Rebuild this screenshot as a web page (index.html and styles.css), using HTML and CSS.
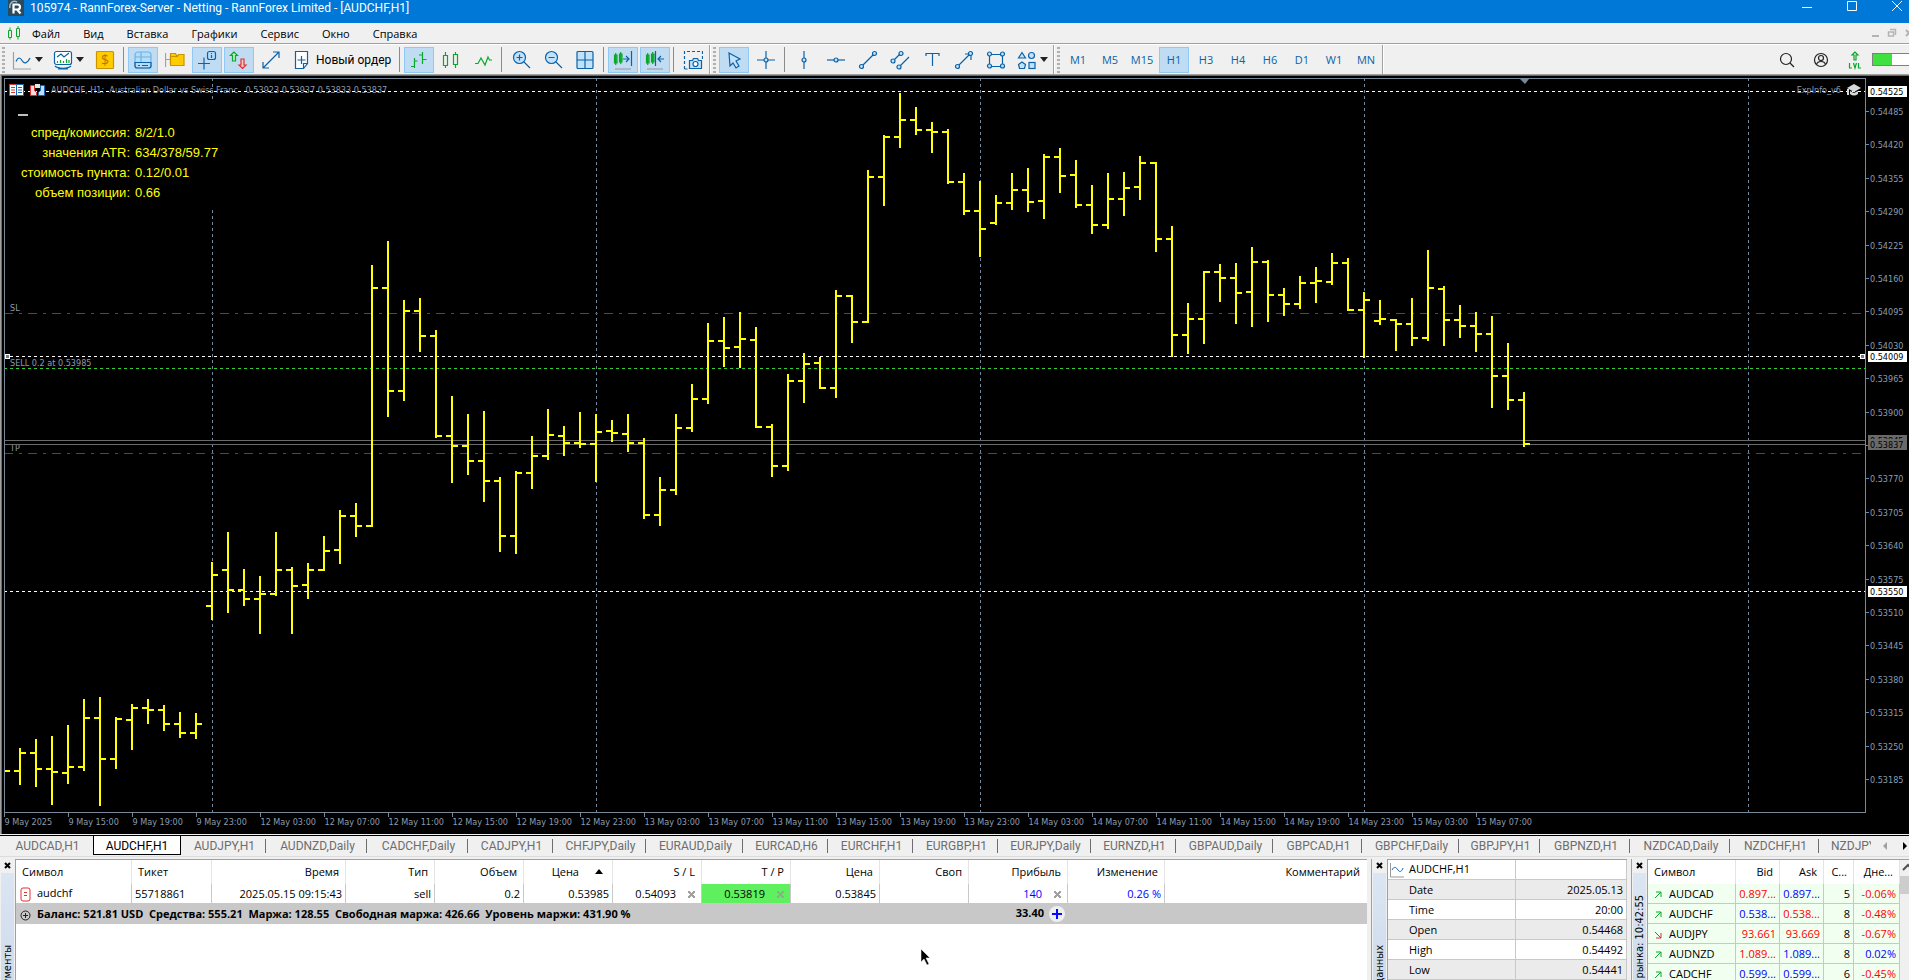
FILE: index.html
```html
<!DOCTYPE html>
<html lang="ru">
<head>
    <meta charset="UTF-8" />
    <meta name="viewport" content="width=device-width, initial-scale=1.0" />
    <title>105974 - RannForex-Server - Netting - RannForex Limited - [AUDCHF,H1]</title>
    <link rel="stylesheet" href="styles.css">
</head>
<body>
    <header class="titlebar">
        <svg class="logo" width="16" height="16" viewBox="0 0 16 16"><rect width="16" height="16" fill="#2b4a5c"/><path d="M2 8C1 3 5 0 9 2" fill="none" stroke="#9fb6c2" stroke-width="1.5"/><path d="M5.500 13.500V4.500H9.500a2.500 2.500 0 0 1 0 5H6M9 9.500l3.500 4" fill="none" stroke="#fff" stroke-width="2.200"/></svg>
        <span class="title-text">105974 - RannForex-Server - Netting - RannForex Limited - [AUDCHF,H1]</span>
        <div class="window-buttons">
            <button aria-label="Свернуть"><svg width="12" height="12"><path d="M1 7.500h10"/></svg></button>
            <button aria-label="Развернуть"><svg width="12" height="12"><path d="M1.500 1.500h9v9h-9z"/></svg></button>
            <button aria-label="Закрыть"><svg width="12" height="12"><path d="M1 1l10 10M11 1L1 11"/></svg></button>
        </div>
    </header>

    <nav class="menubar">
        <svg class="green" width="14" height="16" viewBox="0 0 14 16"><path d="M1.500 5.500h3v7h-3zM3 2.500v3M3 12.500v2M9.500 3.500h3v8h-3zM11 1v2.500M11 11.500v3"/></svg>
        <button>Файл</button>
        <button>Вид</button>
        <button>Вставка</button>
        <button>Графики</button>
        <button>Сервис</button>
        <button>Окно</button>
        <button>Справка</button>
        <div class="child-buttons">
            <svg width="10" height="10"><path d="M2 8h7" stroke="#b4b4b4" stroke-width="2"/></svg>
            <svg width="10" height="10"><path d="M1.500 4h5v4h-5zM3 1.500h5.500V7" fill="none" stroke="#b4b4b4" stroke-width="1.500"/></svg>
            <svg width="10" height="10"><path d="M2 2l6 6M8 2L2 8" stroke="#b4b4b4" stroke-width="2"/></svg>
        </div>
    </nav>

    <div class="toolbar">
        <i class="grip"></i>
        <button class="tool wide" aria-label="График"><svg><path class="gray" d="M1.500 2v17H19"/><path d="M4 11.500C6 7 8 7 10 10.500S15 14 18 8"/></svg><i class="caret"></i></button>
        <button class="tool wide" aria-label="Индикаторы"><svg><rect x="1.500" y="1.500" width="17" height="13" rx="2" fill="#fff"/><path d="M4 7l4-3 3 3 5-4"/><path class="green" d="M4.500 13v-2M7.500 13v-3M10.500 13v-2M13.500 13v-4M16 13v-3"/><path d="M2 16c3 3 13 3 16 0M5 19h10"/></svg><i class="caret"></i></button>
        <button class="tool" aria-label="Торговля"><svg><rect x="1.500" y="1.500" width="17" height="17" rx="1" fill="#ffcc00" stroke="#cc9300"/><text x="10" y="15" class="dollar">$</text></svg></button>
        <i class="sep"></i>
        <button class="tool active" aria-label="Обзор рынка"><svg><rect x="2" y="2" width="16" height="16" rx="3" fill="#b5dcfa" stroke="#6fb2e0"/><path d="M2 7h16M8 2v10" stroke="#6fb2e0"/><path d="M2 12.500h16V16q0 2-2 2H4q-2 0-2-2zM5 15.500h2m2 0h6"/></svg></button>
        <button class="tool" aria-label="Навигатор"><svg><path class="gray" d="M.5 3v14M1 9.500h4"/><path d="M5.500 3.500h5l1 2h4v8h-10z" fill="#ffcc00" stroke="#cc9300"/><path d="M5.500 6.500h7l1-2h5.500v11H5.500z" fill="#ffcc00" stroke="#cc9300"/></svg></button>
        <button class="tool active" aria-label="Окно данных"><svg><path d="M1 13.500h12M7 7.500v12"/><rect x="10.500" y="1.500" width="8" height="8" rx="2" fill="#b5dcfa"/><path d="M14.500 3v1M14.500 5v3"/></svg></button>
        <button class="tool active" aria-label="Тик"><svg><path class="green" fill="#b9f0c0" d="M5 2L1.500 5.500h2V11h3V5.500h2z"/><path stroke="#e03131" fill="#ffc4c4" d="M13.500 18.500L17 15h-2V9h-3v6h-2z"/></svg></button>
        <button class="tool" aria-label="Растянуть"><svg><path d="M2 18L18 2M12 2h6v6M2 12v6h6"/></svg></button>
        <button class="tool order"><svg><path d="M3.500 1.500h12v12l-4 5h-8z" fill="#fff"/><path d="M9.500 6v8M5.500 10h8M15.500 13.500h-4v5"/></svg>Новый ордер</button>
        <i class="sep"></i>
        <button class="tool active" aria-label="Бары"><svg class="green"><path d="M5.500 8v10M2 16.500h3.500M5.500 11h3M13.500 2v12M10 5h3.500M13.500 9.500h4"/></svg></button>
        <button class="tool" aria-label="Свечи"><svg class="green"><path d="M2.500 5.500h4v10h-4zM4.500 2v3.500M4.500 15.500V18M12.500 4.500h4v10h-4zM14.500 2v2.500M14.500 14.500V18"/></svg></button>
        <button class="tool" aria-label="Линия"><svg class="green"><path d="M2 13.500h3L8 8l4 7 3-8 1.500 3H19"/></svg></button>
        <i class="sep"></i>
        <button class="tool" aria-label="Увеличить"><svg><circle cx="8.500" cy="7.500" r="6" fill="#c2e2fa"/><path d="M13 12l6 6M8.500 4.500v6M5.500 7.500h6"/></svg></button>
        <button class="tool" aria-label="Уменьшить"><svg><circle cx="8.500" cy="7.500" r="6" fill="#c2e2fa"/><path d="M13 12l6 6M5.500 7.500h6"/></svg></button>
        <button class="tool" aria-label="Плитка"><svg><rect x="2" y="1.500" width="16" height="17" rx="1" fill="#c2e2fa"/><path d="M10 1.500v17M2 10h16"/></svg></button>
        <i class="sep"></i>
        <button class="tool active" aria-label="Автопрокрутка"><svg><path class="green" d="M1.500 5h2.500v8H1.500zM2.700 3v12M6.500 4h2.500v8H6.500zM7.700 2v12"/><path d="M10 9h5m-2-3l3 3-3 3M18.500 1v15"/><path class="gray" d="M2 19h16"/></svg></button>
        <button class="tool active" aria-label="Сдвиг графика"><svg><path class="green" d="M1.500 5h2.500v8H1.500zM2.700 3v12M6.500 4h2.500v8H6.500zM7.700 2v12"/><path d="M19 9h-5m2-3l-3 3 3 3M10.500 1v15"/><path class="gray" d="M2 19h16"/></svg></button>
        <i class="sep"></i>
        <button class="tool" aria-label="Снимок"><svg><path d="M1.500 19V1.500h18V9M1.500 19H5" stroke-dasharray="3 2"/><path d="M6.500 10.500h3l1-2h4l1 2h3v8h-12z" fill="#c2e2fa"/><circle cx="12.500" cy="14" r="2.500" fill="#fff"/></svg></button>
        <i class="edge"></i>
        <i class="grip"></i>
        <button class="tool active" aria-label="Курсор"><svg><path d="M5 3l11 6-4 2 3 5-3 2-3-5-3 3z" fill="#c2e2fa"/></svg></button>
        <button class="tool" aria-label="Перекрестие"><svg><path d="M10 1v7M10 12v7M1 10h7M12 10h7"/><circle cx="10" cy="10" r="2" fill="#c2e2fa"/></svg></button>
        <i class="sep"></i>
        <button class="tool" aria-label="Вертикальная линия"><svg><path d="M10 1v18"/><circle cx="10" cy="10" r="2" fill="#c2e2fa"/></svg></button>
        <button class="tool" aria-label="Горизонтальная линия"><svg><path d="M1 10h18"/><circle cx="10" cy="10" r="2" fill="#c2e2fa"/></svg></button>
        <button class="tool" aria-label="Трендовая линия"><svg><path d="M3 17L17 3"/><circle cx="3.500" cy="16.500" r="2" fill="#c2e2fa"/><circle cx="16.500" cy="3.500" r="2" fill="#c2e2fa"/></svg></button>
        <button class="tool" aria-label="Канал"><svg><path d="M3 11l8-8M9 17L19 7"/><circle cx="3" cy="11" r="2" fill="#c2e2fa"/><circle cx="11" cy="3.500" r="2" fill="#c2e2fa"/><circle cx="9" cy="17" r="2" fill="#c2e2fa"/></svg></button>
        <button class="tool" aria-label="Текст"><svg><path d="M4 6V3.500h13V6M10.500 3.500V16"/></svg></button>
        <button class="tool" aria-label="Стрелка"><svg><path d="M3 17L17 3M11 4h6v6"/><circle cx="3.500" cy="16.500" r="2" fill="#c2e2fa"/><circle cx="16.500" cy="3.500" r="2" fill="#c2e2fa"/></svg></button>
        <button class="tool" aria-label="Прямоугольник"><svg><path d="M3.500 4.500h13v12h-13z"/><circle cx="3.500" cy="4" r="2" fill="#c2e2fa"/><circle cx="16.500" cy="4" r="2" fill="#c2e2fa"/><circle cx="3.500" cy="16" r="2" fill="#c2e2fa"/><circle cx="16.500" cy="16" r="2" fill="#c2e2fa"/></svg></button>
        <button class="tool wide" aria-label="Фигуры"><svg><g fill="#c2e2fa"><path d="M5 2.500L8.500 8h-7z"/><circle cx="14.500" cy="5.500" r="3"/><path d="M5 12l3.500 2.500-1 4h-5l-1-4z"/><rect x="12" y="12.500" width="6" height="6"/></g></svg><i class="caret"></i></button>
        <i class="edge"></i>
        <i class="grip"></i>
        <button class="tool frame">M1</button>
        <button class="tool frame">M5</button>
        <button class="tool frame">M15</button>
        <button class="tool frame active">H1</button>
        <button class="tool frame">H3</button>
        <button class="tool frame">H4</button>
        <button class="tool frame">H6</button>
        <button class="tool frame">D1</button>
        <button class="tool frame">W1</button>
        <button class="tool frame">MN</button>
        <i class="edge"></i>
        <div class="status">
            <button class="tool" aria-label="Поиск"><svg class="dark"><circle cx="9" cy="9" r="5.500"/><path d="M13 13l4 4"/></svg></button>
            <button class="tool" aria-label="Профиль"><svg class="dark"><circle cx="10" cy="10" r="6.500"/><circle cx="10" cy="8" r="2.500"/><path d="M5.500 14.500c1-4 8-4 9 0"/></svg></button>
            <button class="tool" aria-label="Уровень"><svg class="green"><path d="M10 2L7 5h2v5h2V5h2zM4.500 13v5H7M8.500 13l1.500 5 1.500-5M13.500 13v5H16"/></svg></button>
            <div class="battery"><div class="charge"></div></div>
        </div>
    </div>

    <main class="chart">
        <svg class="plot" id="plot"></svg>
        <svg class="scale" id="scale"></svg>
        <div class="chart-title">
            <svg width="15" height="12"><path d="M.5.500h7v11h-7z" fill="#fff" stroke="#e0302e"/><path d="M7.500.500h7v11h-7z" fill="#fff" stroke="#1267b5"/><path d="M2 3.500h4M2 6h4M2 8.500h4" stroke="#e0302e"/><path d="M9 3.500h4M9 6h4M9 8.500h4" stroke="#1267b5"/></svg>
            <svg width="15" height="12"><path d="M.5 1.500h4v5l2 2v3h-6z" fill="#ffdcdc" stroke="#e0302e"/><path d="M14.500 1.500h-4v5l-2 2v3h6z" fill="#bfe0fa" stroke="#1267b5"/><path d="M5 0h5v4H5z" fill="#e8e8e8"/></svg>
        </div>
        <div class="expert">
            <svg width="16" height="14"><path d="M1 5l7-4 7 4-7 4zM4 8v3q4 3 8 0V8L8 10z" fill="#d8d8d8"/><path d="M2 6v6" stroke="#d8d8d8" stroke-width="2"/></svg>
        </div>
        <div class="info">
            <div class="collapse"></div>
            <table>
                <tr><th>спред/комиссия:</th><td>8/2/1.0</td></tr>
                <tr><th>значения ATR:</th><td>634/378/59.77</td></tr>
                <tr><th>стоимость пункта:</th><td>0.12/0.01</td></tr>
                <tr><th>объем позиции:</th><td>0.66</td></tr>
            </table>
        </div>
    </main>

    <nav class="tabs">
        <button>AUDCAD,H1</button>
        <button class="current">AUDCHF,H1</button>
        <button>AUDJPY,H1</button>
        <button>AUDNZD,Daily</button>
        <button>CADCHF,Daily</button>
        <button>CADJPY,H1</button>
        <button>CHFJPY,Daily</button>
        <button>EURAUD,Daily</button>
        <button>EURCAD,H6</button>
        <button>EURCHF,H1</button>
        <button>EURGBP,H1</button>
        <button>EURJPY,Daily</button>
        <button>EURNZD,H1</button>
        <button>GBPAUD,Daily</button>
        <button>GBPCAD,H1</button>
        <button>GBPCHF,Daily</button>
        <button>GBPJPY,H1</button>
        <button>GBPNZD,H1</button>
        <button>NZDCAD,Daily</button>
        <button>NZDCHF,H1</button>
        <button class="cut">NZDJPY</button>
        <span class="scroll"><i class="left"></i><i class="right"></i></span>
    </nav>

    <div class="panels">
        <section class="panel terminal">
            <div class="side">
                <button class="close" aria-label="Закрыть"><svg width="7" height="7"><path d="M1 1l5 5M6 1L1 6"/></svg></button>
                <div class="strip low"><span>Инструменты</span></div>
            </div>
            <div class="content">
                <table class="trades">
                    <colgroup><col class="c-symbol"><col class="c-ticket"><col class="c-time"><col><col><col><col><col><col><col><col class="c-profit"><col class="c-change"><col class="c-comment"></colgroup>
                    <thead>
                        <tr><th class="l">Символ</th><th class="l">Тикет</th><th>Время</th><th>Тип</th><th>Объем</th><th class="sorted">Цена<i></i></th><th>S / L</th><th>T / P</th><th>Цена</th><th>Своп</th><th>Прибыль</th><th>Изменение</th><th>Комментарий</th></tr>
                    </thead>
                    <tbody>
                        <tr>
                            <td class="l"><svg width="11" height="15"><rect x="1" y="1" width="9" height="13" rx="2" fill="#fff" stroke="#e03131" stroke-width="1"/><path d="M4 5.500h3M4 8.500h3" stroke="#e03131"/></svg>audchf</td>
                            <td class="l">55718861</td><td>2025.05.15 09:15:43</td><td>sell</td><td>0.2</td><td>0.53985</td>
                            <td>0.54093<b class="x"></b></td><td class="hit">0.53819<b class="x"></b></td><td>0.53845</td><td></td>
                            <td class="up">140<b class="x"></b></td><td class="up">0.26 %</td><td></td>
                        </tr>
                        <tr class="balance">
                            <td class="l" colspan="10"><svg width="11" height="11"><circle cx="5.500" cy="5.500" r="4.500" fill="none" stroke="#222"/><path d="M5.500 3v5M3 5.500h5" stroke="#222"/></svg>Баланс: 521.81 USD&nbsp; Средства: 555.21&nbsp; Маржа: 128.55&nbsp; Свободная маржа: 426.66&nbsp; Уровень маржи: 431.90 %</td>
                            <td>33.40<svg class="plus" width="16" height="16"><circle cx="8" cy="8" r="8" fill="#efefef"/><path d="M8 3v10M3 8h10" stroke="#0a0aff" stroke-width="2"/></svg></td><td></td><td></td>
                        </tr>
                    </tbody>
                </table>
            </div>
        </section>

        <section class="panel data">
            <div class="side">
                <button class="close" aria-label="Закрыть"><svg width="7" height="7"><path d="M1 1l5 5M6 1L1 6"/></svg></button>
                <div class="strip low"><span>Окно данных</span></div>
            </div>
            <div class="content">
                <table class="values">
                    <tr><th><svg width="16" height="16"><path d="M1.500 1v14H15" fill="none" stroke="#999"/><path d="M3 8c2-4 4-3 6 0s4 1 5-2" fill="none" stroke="#1267b5"/></svg>AUDCHF,H1</th><td></td></tr>
                    <tr><th>Date</th><td>2025.05.13</td></tr>
                    <tr><th>Time</th><td>20:00</td></tr>
                    <tr><th>Open</th><td>0.54468</td></tr>
                    <tr><th>High</th><td>0.54492</td></tr>
                    <tr><th>Low</th><td>0.54441</td></tr>
                </table>
            </div>
        </section>

        <section class="panel watch">
            <div class="side">
                <button class="close" aria-label="Закрыть"><svg width="7" height="7"><path d="M1 1l5 5M6 1L1 6"/></svg></button>
                <div class="strip"><span>Обзор рынка: 10:42:55</span></div>
            </div>
            <div class="content">
                <table class="quotes">
                    <colgroup><col class="q-symbol"><col class="q-price"><col class="q-price"><col class="q-spread"><col></colgroup>
                    <thead><tr><th class="l">Символ</th><th>Bid</th><th>Ask</th><th>С...</th><th>Дне...</th></tr></thead>
                    <tbody>
                        <tr><td class="l"><svg class="rise"><path d="M1 7l6-6M2 1h5v5"/></svg>AUDCAD</td><td class="down">0.897...</td><td class="up">0.897...</td><td>5</td><td class="down">-0.06%</td></tr>
                        <tr><td class="l"><svg class="rise"><path d="M1 7l6-6M2 1h5v5"/></svg>AUDCHF</td><td class="up">0.538...</td><td class="down">0.538...</td><td>8</td><td class="down">-0.48%</td></tr>
                        <tr><td class="l"><svg class="fall"><path d="M1 1l6 6M2 7h5V2"/></svg>AUDJPY</td><td class="down">93.661</td><td class="down">93.669</td><td>8</td><td class="down">-0.67%</td></tr>
                        <tr><td class="l"><svg class="rise"><path d="M1 7l6-6M2 1h5v5"/></svg>AUDNZD</td><td class="down">1.089...</td><td class="up">1.089...</td><td>8</td><td class="up">0.02%</td></tr>
                        <tr><td class="l"><svg class="rise"><path d="M1 7l6-6M2 1h5v5"/></svg>CADCHF</td><td class="up">0.599...</td><td class="up">0.599...</td><td>6</td><td class="down">-0.45%</td></tr>
                    </tbody>
                </table>
                <div class="scrollbar"><svg width="10" height="16"><path d="M3 10l5-5 5 5" fill="none" stroke="#505050" stroke-width="2"/></svg><div class="thumb"></div></div>
            </div>
        </section>
    </div>

    <svg class="pointer" width="11" height="18"><path d="M1 1v13l3-3 3 6 2-1-3-6h4z" fill="#000" stroke="#fff" stroke-width=".5"/></svg>

    <script src="chart.js"></script>
</body>
</html>
```
FILE: styles.css
```css
:root {
    --face: #f0f0f0;
    --blue: #0b62a8;
    --green: #0aa82a;
    --grid: #778899;
    --hot: #c0dcf3;
    --hot-border: #90c8f6;
}
* {
    box-sizing: border-box;
}
body {
    margin: 0;
    height: 100vh;
    display: flex;
    flex-direction: column;
    overflow: hidden;
    background: var(--face);
    color: #000;
    font-family: "Open Sans", "Noto Sans", sans-serif;
    font-size: 11px;
}
button {
    border: none;
    background: none;
    padding: 0;
    margin: 0;
    font: inherit;
    color: inherit;
}
table {
    border-collapse: separate;
    border-spacing: 0;
}

/* title and menu */
.titlebar {
    flex: none;
    display: flex;
    height: 23px;
    padding-left: 8px;
    background: #0078d7;
    color: #fff;
    font: 12px/16px Roboto, sans-serif;
}
.logo {
    margin-right: 6px;
}
.window-buttons {
    margin-left: auto;
    display: flex;
}
.window-buttons button {
    width: 45px;
    height: 16px;
}
.window-buttons button:last-child {
    margin-right: -10px;
}
.window-buttons path {
    fill: none;
    stroke: #fff;
}
.menubar {
    flex: none;
    display: flex;
    align-items: center;
    gap: 23px;
    height: 21px;
    padding-left: 7px;
    border-bottom: 1px solid #a0a0a0;
}
.menubar > svg {
    margin-right: -12px;
    fill: none;
    stroke: var(--green);
}
.child-buttons {
    margin-left: auto;
    display: flex;
    gap: 7px;
    margin-right: -5px;
}

/* toolbar */
.toolbar {
    flex: none;
    display: flex;
    align-items: center;
    height: 30px;
    border-top: 1px solid #fff;
}
.grip {
    width: 3px;
    height: 26px;
    margin: 0 2px;
    background: repeating-linear-gradient(#b0b0b0 0 2px, transparent 2px 4px);
}
.sep, .edge {
    flex: none;
    width: 1px;
    height: 25px;
    margin: 0 3px 0 2px;
    background: #8c8c8c;
}
.edge {
    width: 2px;
    height: 29px;
    margin: 0;
    background: #a0a0a0;
    border-right: 1px solid #fff;
}
.tool {
    flex: none;
    display: flex;
    align-items: center;
    justify-content: center;
    width: 30px;
    height: 26px;
    margin: 0 1px;
    border: 1px solid transparent;
}
.tool.active {
    background: var(--hot);
    border-color: var(--hot-border);
}
.tool svg {
    flex: none;
    width: 20px;
    height: 20px;
    fill: none;
    stroke: var(--blue);
    stroke-width: 1.2;
}
.tool svg.green, .tool .green {
    stroke: var(--green);
}
.tool svg.dark {
    stroke: #222;
}
.tool .gray {
    stroke: #a0a0a0;
}
.dollar {
    font: 14px "Open Sans", sans-serif;
    text-anchor: middle;
    fill: #b07800;
    stroke: none;
}
.wide {
    width: 41px;
    margin: 0;
    padding-left: 4px;
    justify-content: flex-start;
}
.caret {
    margin-left: 3px;
    border: 4px solid transparent;
    border-top: 5px solid #222;
    border-bottom: none;
}
.order {
    width: 108px;
    padding-left: 3px;
    gap: 4px;
    justify-content: flex-start;
    font: 12px Roboto, sans-serif;
    white-space: nowrap;
}
.frame {
    color: var(--blue);
}
.status {
    margin-left: auto;
    display: flex;
    align-items: center;
}
.status .tool {
    margin: 0 2px;
}
.battery {
    width: 37px;
    height: 13px;
    border: 1px solid #808080;
    border-right: none;
    background: #fff;
}
.charge {
    width: 19px;
    height: 11px;
    background: #40e040;
}

/* chart */
.chart {
    flex: none;
    position: relative;
    display: flex;
    height: 760px;
    background: #000;
    border-top: 1px solid #a0a0a0;
    border-left: 1px solid #a0a0a0;
    box-shadow: inset 1px 1px #696969;
}
.plot {
    flex: 1;
    min-width: 0;
    height: 759px;
}
.scale {
    flex: none;
    width: 44px;
    height: 759px;
}
.chart text {
    font: 9px "DejaVu Sans Condensed", "DejaVu Sans", sans-serif;
    fill: #8c9cad;
}
.chart .tag {
    fill: #000;
}
.axis {
    fill: none;
    stroke: var(--grid);
}
.day {
    stroke: var(--grid);
    stroke-dasharray: 3 3;
}
.level {
    stroke: #fff;
    stroke-dasharray: 3 3;
}
.entry {
    stroke: #32cd32;
    stroke-dasharray: 3 3;
}
.stop {
    stroke: #f00;
    stroke-dasharray: 9 6 3 6;
}
.quote {
    stroke: #696969;
}
.bars {
    fill: none;
    stroke: #ff0;
    stroke-width: 2;
}
.chart-title {
    position: absolute;
    left: 8px;
    top: 9px;
    display: flex;
    gap: 6px;
}
.expert {
    position: absolute;
    right: 47px;
    top: 8px;
}
.info {
    position: absolute;
    left: 5px;
    top: 25px;
    width: 212px;
    height: 110px;
    background: #000;
    color: #ff0;
    font: 13px/20px "Liberation Sans", Arial, sans-serif;
}
.info th {
    min-width: 129px;
    width: 129px;
    padding: 0 5px 0 3px;
    text-align: right;
    font-weight: normal;
    white-space: nowrap;
}
.info td {
    padding: 0;
}
.collapse {
    width: 10px;
    height: 2px;
    margin: 14px 0 7px 12px;
    background: #c0c0c0;
}

/* chart tabs */
.tabs {
    flex: none;
    display: grid;
    grid-template-columns: 93px 88px 85px 101px 101px 85px 93px 97px 85px 85px 85px 93px 85px 97px 89px 97px 81px 90px 100px 89px 52px 1fr;
    height: 22px;
    margin-top: 1px;
    border-top: 1px solid #000;
    border-bottom: 1px solid #dcdcdc;
    color: #6d6d6d;
    font: 12px Roboto, sans-serif;
}
.tabs button {
    height: 19px;
    padding: 1px 0 0 2px;
    background: linear-gradient(#6d6d6d, #6d6d6d) right center / 1px 14px no-repeat;
    white-space: nowrap;
}
.tabs button:first-child {
    background: none;
}
.tabs .current {
    padding-left: 0;
    border: 1px solid #000;
    border-top: none;
    background: #fff;
    color: #000;
}
.tabs .cut {
    background: none;
    padding-left: 12px;
    overflow: hidden;
    text-align: left;
}
.scroll {
    display: flex;
    justify-content: space-between;
    align-items: center;
    padding: 0 2px 0 12px;
}
.scroll i {
    border: 4px solid transparent;
}
.scroll .left {
    border-right-color: #a0a0a0;
    border-left: none;
}
.scroll .right {
    border-left-color: #000;
    border-right: none;
}

/* docked panels */
.panels {
    flex: 1;
    min-height: 0;
    display: flex;
    margin-top: 2px;
}
.panel {
    display: flex;
    min-width: 0;
    overflow: hidden;
}
.terminal {
    flex: 1;
}
.data {
    flex: none;
    width: 260px;
    border-left: 1px solid #a0a0a0;
}
.watch {
    flex: none;
    width: 278px;
    border-left: 1px solid #a0a0a0;
}
.side {
    flex: none;
    width: 15px;
    padding: 0 1px;
}
.close {
    display: flex;
    align-items: center;
    justify-content: center;
    width: 12px;
    height: 12px;
    margin-bottom: 2px;
}
.close path {
    stroke: #000;
    stroke-width: 2;
}
.strip {
    width: 13px;
    height: 400px;
    padding-top: 22px;
    background: linear-gradient(#dbe6f3, #a9bdd6);
    font: 11px/13px "DejaVu Sans Condensed", "DejaVu Sans", sans-serif;
}
.strip.low {
    padding-top: 72px;
}
.strip span {
    display: block;
    writing-mode: vertical-rl;
    transform: rotate(180deg);
    white-space: nowrap;
}
.content {
    flex: 1;
    min-width: 0;
    margin-right: 4px;
    border-top: 1px solid #a0a0a0;
    border-left: 1px solid #a0a0a0;
    background: #fff;
}
.panel table {
    table-layout: fixed;
    width: 100%;
}
.panel th, .panel td {
    padding: 0 3px;
    border-right: 1px solid #c8c8c8;
    font-weight: normal;
    text-align: right;
    white-space: nowrap;
    overflow: hidden;
}
.panel thead th {
    height: 24px;
    padding: 0 6px 2px;
    border-color: #e4e4e4;
}
.panel .l {
    text-align: left;
}
.panel td svg {
    vertical-align: middle;
}
.panel .up {
    color: #00f;
}
.panel .down {
    color: #f00;
}
.trades col {
    width: 89px;
}
.trades .c-symbol { width: 116px; }
.trades .c-ticket { width: 80px; }
.trades .c-time { width: 134px; }
.trades .c-profit { width: 99px; }
.trades .c-change { width: 97px; }
.trades .c-comment { width: auto; }
.trades td {
    height: 19px;
}
.trades td:first-child {
    padding-left: 4px;
}
.trades td:first-child svg {
    margin-right: 6px;
}
.trades tr > :last-child {
    border-color: transparent;
}
.sorted i {
    display: inline-block;
    margin: 0 3px 2px 16px;
    border: 4px solid transparent;
    border-top: none;
    border-bottom: 5px solid #000;
}
.hit {
    background: #5ff05f;
}
.x {
    display: inline-block;
    width: 7px;
    height: 7px;
    margin: 0 3px 0 12px;
    background:
        linear-gradient(45deg, transparent 40%, #a0a0a0 40% 60%, transparent 60%),
        linear-gradient(135deg, transparent 40%, #a0a0a0 40% 60%, transparent 60%);
}
.balance td {
    height: 21px;
    border: none;
    background: #c8c8c8;
    font-weight: bold;
}
.plus {
    margin-left: 5px;
}
.panel .values th, .panel .values td {
    height: 20px;
    border-bottom: 1px solid #c8c8c8;
}
.panel .values th {
    width: 128px;
    padding-left: 21px;
    text-align: left;
}
.panel .values tr:first-child th {
    padding-left: 1px;
}
.values th svg {
    margin-right: 4px;
    vertical-align: middle;
}
.values tr:nth-child(even) {
    background: #ebebeb;
}
.watch .content {
    display: flex;
    margin-right: 0;
}
.panel .quotes {
    width: 252px;
}
.quotes .q-symbol { width: 88px; }
.quotes .q-price { width: 44px; }
.quotes .q-spread { width: 30px; }
.quotes td {
    height: 20px;
    border-bottom: 1px solid #c8c8c8;
    background: #f0fff0;
}
.quotes td:first-child {
    padding-left: 6px;
}
.quotes svg {
    width: 8px;
    height: 8px;
    margin-right: 7px;
    fill: none;
    stroke: var(--green);
}
.quotes svg.fall {
    stroke: #d83030;
}
.scrollbar {
    flex: 1;
    overflow: hidden;
    background: var(--face);
}
.scrollbar svg {
    display: block;
}
.thumb {
    height: 18px;
    background: #cdcdcd;
}
.pointer {
    position: absolute;
    left: 920px;
    top: 948px;
}
```
FILE: chart.js
```js
const NS = "http://www.w3.org/2000/svg";
const OFFSET = 75; // rows above the chart area
const STEP = 16;
const FIRST_X = 19;

// high, low, open, close of every hourly bar, as screen rows
const bars = [
    [748, 785, 771, 753], [739, 787, 753, 769], [736, 805, 769, 772], [725, 784, 773, 767],
    [699, 771, 767, 718], [697, 806, 718, 759], [717, 769, 759, 719], [704, 750, 720, 708],
    [699, 724, 708, 710], [705, 731, 710, 724], [712, 738, 724, 733], [713, 739, 733, 724],
    [562, 620, 606, 575], [532, 613, 570, 590], [569, 606, 590, 599], [576, 634, 599, 594],
    [532, 596, 594, 570], [567, 634, 570, 586], [563, 599, 585, 570], [536, 571, 570, 551],
    [510, 564, 550, 516], [503, 537, 516, 526], [265, 527, 526, 288], [241, 417, 288, 391],
    [300, 401, 391, 311], [298, 352, 311, 336], [330, 438, 336, 436], [396, 483, 436, 446],
    [414, 475, 446, 461], [411, 502, 461, 481], [477, 552, 481, 536], [471, 554, 536, 473],
    [436, 489, 473, 456], [409, 460, 456, 435], [426, 456, 436, 443], [412, 448, 443, 444],
    [414, 482, 444, 432], [420, 442, 431, 433], [414, 452, 434, 443], [438, 519, 443, 515],
    [477, 526, 515, 490], [414, 495, 490, 428], [384, 432, 428, 399], [323, 404, 399, 341],
    [317, 367, 341, 348], [312, 368, 347, 339], [327, 428, 340, 427], [424, 477, 427, 466],
    [374, 471, 466, 381], [353, 403, 381, 364], [357, 389, 363, 388], [290, 398, 388, 296],
    [295, 343, 296, 322], [170, 323, 322, 177], [135, 206, 177, 137], [93, 148, 137, 120],
    [107, 135, 120, 130], [122, 153, 130, 132], [129, 184, 132, 182], [173, 215, 182, 211],
    [181, 257, 211, 229], [195, 225, 223, 203], [173, 210, 203, 190], [168, 212, 190, 202],
    [154, 219, 201, 157], [148, 193, 157, 176], [160, 208, 175, 205], [185, 234, 205, 225],
    [173, 229, 225, 199], [172, 216, 199, 188], [156, 200, 187, 163], [162, 252, 163, 239],
    [226, 357, 239, 335], [303, 354, 335, 319], [271, 344, 319, 272], [264, 302, 272, 278],
    [263, 324, 278, 293], [247, 327, 292, 262], [260, 322, 262, 295], [288, 316, 295, 304],
    [276, 309, 304, 283], [267, 303, 283, 281], [253, 285, 282, 263], [258, 311, 263, 310],
    [292, 358, 310, 300], [300, 325, 321, 319], [319, 351, 320, 324], [298, 346, 324, 338],
    [250, 341, 338, 288], [286, 346, 289, 320], [305, 338, 320, 326], [312, 352, 326, 334],
    [316, 408, 334, 376], [343, 410, 376, 400], [392, 447, 400, 444]
];

const times = ["9 May 2025", "9 May 15:00", "9 May 19:00", "9 May 23:00"];
for (const day of [12, 13, 14]) {
    for (const hour of ["03", "07", "11", "15", "19", "23"]) {
        times.push(`${day} May ${hour}:00`);
    }
}
times.push("15 May 03:00", "15 May 07:00");

function add(parent, name, attrs, text) {
    const el = document.createElementNS(NS, name);
    for (const key in attrs) el.setAttribute(key, attrs[key]);
    if (text) el.textContent = text;
    parent.appendChild(el);
    return el;
}

function drawPlot() {
    const svg = document.getElementById("plot");
    const g = add(svg, "g", { transform: `translate(0 ${-OFFSET})` });

    add(g, "text", { x: 50, y: 93 }, "AUDCHF, H1:\u00a0 Australian Dollar vs Swiss Franc\u00a0\u00a0 0.53923 0.53937 0.53833 0.53837");
    const label = add(svg, "svg", { x: "100%", y: 0, overflow: "visible" });
    add(label, "text", { x: -24, y: 18, "text-anchor": "end" }, "ExpInfo_v6");
    add(g, "text", { x: 9, y: 311 }, "SL");
    add(g, "text", { x: 9, y: 366 }, "SELL 0.2 at 0.53985");
    add(g, "text", { x: 9, y: 451 }, "TP");

    for (let x = 211.5; x < 1800; x += 384) {
        add(g, "line", { class: "day", x1: x, x2: x, y1: 78, y2: 812 });
    }

    const hline = (cls, y) => add(g, "line", { class: cls, x1: 3, x2: "100%", y1: y + 0.5, y2: y + 0.5 });
    hline("level", 91);
    hline("stop", 313);
    hline("level", 356);
    hline("entry", 368);
    hline("quote", 440);
    hline("quote", 444);
    hline("stop", 453);
    hline("level", 591);

    let d = "M3 771h6";
    bars.forEach(([high, low, open, close], i) => {
        const x = FIRST_X + i * STEP;
        d += `M${x} ${high}V${low}M${x - 6} ${open}H${x}M${x} ${close}H${x + 6}`;
    });
    add(g, "path", { class: "bars", d });

    hline("axis", 78);
    hline("axis", 812);
    add(g, "path", { class: "axis", d: "M3.5 78V813" });
    times.forEach((t, i) => {
        const x = 3.5 + i * 64;
        add(g, "path", { class: "axis", d: `M${x} 812v5` });
        add(g, "text", { x, y: 825 }, t);
    });
    add(g, "path", { fill: "#778899", d: "M1519 79h9l-4 5z" });

    // anchors of the selected level
    add(g, "rect", { x: 4.5, y: 354.5, width: 4, height: 4, fill: "#708090", stroke: "#fff" });
    const end = add(g, "svg", { x: "100%", y: 354, overflow: "visible" });
    add(end, "rect", { x: -4.5, y: 0.5, width: 4, height: 4, fill: "#708090", stroke: "#fff" });
}

function drawScale() {
    const svg = document.getElementById("scale");
    const g = add(svg, "g", { transform: `translate(0 ${-OFFSET})` });
    add(g, "path", { class: "axis", d: "M.5 78V813" });

    for (let i = 0; i <= 20; i++) {
        const y = Math.round(111 + i * 33.4);
        add(g, "path", { class: "axis", d: `M1 ${y + 0.5}h3` });
        if (i !== 10) add(g, "text", { x: 5, y: y + 4 }, (0.54485 - i * 0.00065).toFixed(5));
    }

    const tag = (price, y, fill) => {
        add(g, "rect", { x: 3, y: y - 5, width: 39, height: 11, fill });
        add(g, "text", { class: "tag", x: 5, y: y + 4 }, price);
    };
    tag("0.54525", 91, "#fff");
    tag("0.54009", 356, "#fff");
    tag("0.53550", 591, "#fff");
    tag("0.53845", 440, "#696969");
    tag("0.53837", 444, "#696969");
}

drawPlot();
drawScale();
```
